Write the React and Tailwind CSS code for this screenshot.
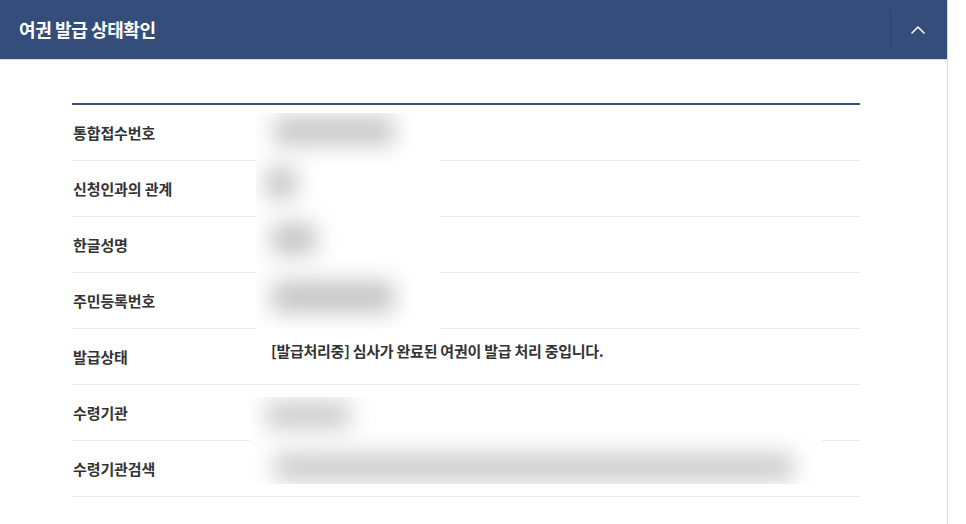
import { ChevronUp } from "lucide-react";

const rows = [
  { label: "통합접수번호" },
  { label: "신청인과의 관계" },
  { label: "한글성명" },
  { label: "주민등록번호" },
  { label: "발급상태", value: "[발급처리중] 심사가 완료된 여권이 발급 처리 중입니다." },
  { label: "수령기관" },
  { label: "수령기관검색" },
];

// blurred (masked) personal data
const blobs1 = [
  { l: 18, t: 4, w: 120, h: 28 },
  { l: 10, t: 54, w: 30, h: 32 },
  { l: 16, t: 110, w: 44, h: 32 },
  { l: 16, t: 168, w: 122, h: 32 },
];
const blobs2 = [
  { l: 16, t: 4, w: 84, h: 28 },
  { l: 24, t: 56, w: 520, h: 28 },
];

export default function App() {
  return (
    <div
      className="w-[948px] min-h-[524px] bg-white border-r border-[#dcdcdc]"
      style={{ fontFamily: '"Noto Sans CJK KR", "Noto Sans", sans-serif' }}
    >
      <div className="h-[60px] bg-[#344d7a] border-b border-[#dadde3] flex items-center justify-between">
        <h1 className="pl-[19px] text-white text-[18px] font-bold tracking-[-0.4px]">여권 발급 상태확인</h1>
        <div className="h-[42px] flex items-center">
          <div className="h-full w-px bg-[#2d4470]" />
          <button className="w-[56px] pr-[2px] flex items-center justify-center text-white">
            <ChevronUp size={24} strokeWidth={1.5} />
          </button>
        </div>
      </div>

      <div className="pt-[43px] pl-[72px] pr-[87px]">
        <div className="relative border-t-2 border-[#3a5080]">
          {rows.map((r) => (
            <div key={r.label} className="h-[56px] flex border-b border-[#ebebeb]">
              <div className="w-[184px] pl-px flex items-center pt-[2px] text-[15px] font-bold text-[#333] tracking-[-0.1px]">
                {r.label}
              </div>
              <div className="flex-1 pl-[15px] pt-[11px] text-[15px] font-semibold text-[#333] tracking-[-0.25px]">
                {r.value}
              </div>
            </div>
          ))}

          <div className="absolute left-[184px] top-[8px] w-[184px] h-[216px] bg-white overflow-hidden">
            {blobs1.map((b, i) => (
              <div
                key={i}
                className="absolute bg-[#c6c6c6] blur-[11px] rounded"
                style={{ left: b.l, top: b.t, width: b.w, height: b.h }}
              />
            ))}
          </div>

          <div className="absolute left-[178px] top-[292px] w-[572px] h-[87px] bg-white overflow-hidden">
            {blobs2.map((b, i) => (
              <div
                key={i}
                className="absolute bg-[#cdcdcd] blur-[11px] rounded"
                style={{ left: b.l, top: b.t, width: b.w, height: b.h }}
              />
            ))}
          </div>
        </div>
      </div>
    </div>
  );
}
